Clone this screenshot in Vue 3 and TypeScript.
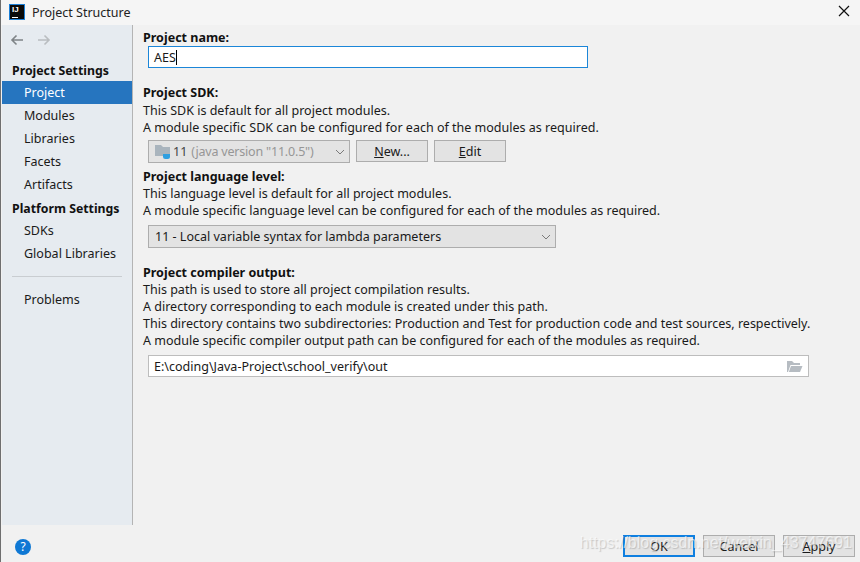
<script setup lang="ts">
interface NavRow {
  label: string;
  kind: 'head' | 'item' | 'sep';
  active?: boolean;
}

const navRows: NavRow[] = [
  { label: 'Project Settings', kind: 'head' },
  { label: 'Project', kind: 'item', active: true },
  { label: 'Modules', kind: 'item' },
  { label: 'Libraries', kind: 'item' },
  { label: 'Facets', kind: 'item' },
  { label: 'Artifacts', kind: 'item' },
  { label: 'Platform Settings', kind: 'head' },
  { label: 'SDKs', kind: 'item' },
  { label: 'Global Libraries', kind: 'item' },
  { label: '', kind: 'sep' },
  { label: 'Problems', kind: 'item' }
];
</script>

<template>
  <div class="dialog">
    <header class="title-bar">
      <div class="app-logo">
        <span class="logo-text">IJ</span>
        <span class="logo-line"></span>
      </div>
      <span class="title-text">Project Structure</span>
      <svg class="close-icon" width="12" height="12" viewBox="0 0 12 12">
        <path d="M1 1 L11 11 M11 1 L1 11" stroke="#111" stroke-width="1.2" fill="none" />
      </svg>
    </header>

    <div class="body">
      <aside class="sidebar">
        <div class="history">
          <svg width="16" height="14" viewBox="0 0 16 14">
            <path d="M14 7 H3 M7.5 2.5 L3 7 L7.5 11.5" stroke="#7f8487" stroke-width="1.6" fill="none" />
          </svg>
          <svg width="16" height="14" viewBox="0 0 16 14">
            <path d="M2 7 H13 M8.5 2.5 L13 7 L8.5 11.5" stroke="#b9bdc0" stroke-width="1.6" fill="none" />
          </svg>
        </div>
        <template v-for="row in navRows" :key="row.label">
          <div v-if="row.kind === 'sep'" class="nav-sep"></div>
          <div v-else :class="['nav-row', row.kind, { active: row.active }]">{{ row.label }}</div>
        </template>
      </aside>

      <main class="content">
        <section class="name-block">
          <label class="field-label">Project name:</label>
          <div class="name-input"><span>AES</span><i class="caret"></i></div>
        </section>

        <section class="sdk-block">
          <h4 class="field-label sdk-label">Project SDK:</h4>
          <p>This SDK is default for all project modules.</p>
          <p>A module specific SDK can be configured for each of the modules as required.</p>
          <div class="sdk-row">
            <div class="combo sdk-combo">
              <svg class="sdk-icon" width="16" height="16" viewBox="0 0 16 16">
                <path d="M0 1 H6 L8 3 H15 V12 H0 Z" fill="#a9b4bd" />
                <path d="M8 10 H15 V12.5 Q15 15 12.5 15 H10.5 Q8 15 8 12.5 Z" fill="#2f9fe0" />
              </svg>
              <span class="sdk-num">11</span>
              <span class="sdk-ver">(java version "11.0.5")</span>
              <svg class="chevron" width="10" height="6" viewBox="0 0 10 6">
                <path d="M1 1 L5 5 L9 1" stroke="#7a7a7a" stroke-width="1" fill="none" />
              </svg>
            </div>
            <button class="btn sdk-btn"><u>N</u>ew...</button>
            <button class="btn sdk-btn"><u>E</u>dit</button>
          </div>
        </section>

        <section class="level-block">
          <h4 class="field-label">Project language level:</h4>
          <p>This language level is default for all project modules.</p>
          <p>A module specific language level can be configured for each of the modules as required.</p>
          <div class="combo level-combo">
            <span>11 - Local variable syntax for lambda parameters</span>
            <svg class="chevron" width="10" height="6" viewBox="0 0 10 6">
              <path d="M1 1 L5 5 L9 1" stroke="#7a7a7a" stroke-width="1" fill="none" />
            </svg>
          </div>
        </section>

        <section class="output-block">
          <h4 class="field-label">Project compiler output:</h4>
          <p>This path is used to store all project compilation results.</p>
          <p>A directory corresponding to each module is created under this path.</p>
          <p>This directory contains two subdirectories: Production and Test for production code and test sources, respectively.</p>
          <p>A module specific compiler output path can be configured for each of the modules as required.</p>
          <div class="path-input">
            <span>E:\coding\Java-Project\school_verify\out</span>
            <svg width="16" height="13" viewBox="0 0 16 13">
              <path d="M0 1 H5 L7 3 H13 V5 H3.5 L1 12 H0 Z" fill="#b6bcc2" />
              <path d="M4 6 H15.5 L13 12 H1.8 Z" fill="#b6bcc2" />
            </svg>
          </div>
        </section>
      </main>
    </div>

    <footer class="footer">
      <div class="help">?</div>
      <div class="actions">
        <button class="btn primary">OK</button>
        <button class="btn">Cancel</button>
        <button class="btn"><u>A</u>pply</button>
      </div>
      <span class="watermark">https://blog.csdn.net/weixin_43747691</span>
    </footer>
  </div>
</template>

<style>
html,
body {
  margin: 0;
  background: #f1f1f1;
}
</style>

<style scoped>
.dialog {
  width: 860px;
  height: 562px;
  display: flex;
  flex-direction: column;
  overflow: hidden;
  box-sizing: border-box;
  border-left: 1px solid #6f6f6f;
  background: #f1f1f1;
  color: #1a1a1a;
  font-family: "Noto Sans", "Open Sans", sans-serif;
  font-size: 12.53px;
}

.title-bar {
  height: 25px;
  flex-shrink: 0;
  display: flex;
  align-items: center;
  background: #f5f5f5;
  padding-left: 8px;
  padding-right: 10px;
}

.app-logo {
  width: 16px;
  height: 16px;
  margin-top: -1px;
  background: #0a0a0a;
  border: 1.5px solid #1c7fd6;
  box-sizing: border-box;
  position: relative;
  margin-right: 7px;
}

.logo-text {
  position: absolute;
  left: 2px;
  top: 1px;
  color: #fff;
  font-family: "Liberation Sans", sans-serif;
  font-size: 8px;
  line-height: 8px;
  font-weight: 700;
}

.logo-line {
  position: absolute;
  left: 2px;
  bottom: 1px;
  width: 6px;
  height: 1px;
  background: #fff;
}

.title-text {
  flex: 1;
  font-size: 12.5px;
  color: #222;
}

.close-icon {
  margin-top: -3px;
}

.body {
  flex: 1;
  display: flex;
  min-height: 0;
}

.sidebar {
  width: 130px;
  flex-shrink: 0;
  background: #e6ebf0;
  border-right: 1px solid #b4b4b4;
  margin-left: 1px;
}

.history {
  height: 33px;
  display: flex;
  align-items: center;
  gap: 11px;
  padding: 0 0 4px 7px;
  box-sizing: border-box;
}

.nav-row {
  height: 23px;
  line-height: 23px;
  white-space: nowrap;
}

.nav-row.head {
  font-weight: 700;
  font-size: 12.3px;
  line-height: 25px;
  padding-left: 10px;
  color: #111;
}

.nav-row.item {
  padding-left: 22px;
}

.nav-row.active {
  background: #2675bf;
  color: #fff;
}

.nav-sep {
  height: 1px;
  margin: 11px 10px;
  background: #c9cdd1;
}

.content {
  flex: 1;
  padding: 4px 0 0 10px;
  min-width: 0;
}

p,
h4 {
  margin: 0;
}

p,
.field-label {
  display: block;
  height: 17px;
  line-height: 17px;
  white-space: nowrap;
}

.field-label {
  font-weight: 700;
  color: #111;
}

.sdk-label {
  height: 18px;
}

.name-input {
  box-sizing: border-box;
  width: 440px;
  height: 22px;
  margin: 0 0 0 5px;
  border: 1px solid #1c86d8;
  background: #fff;
  display: flex;
  align-items: center;
  padding-left: 5px;
}

.caret {
  width: 1px;
  height: 15px;
  background: #000;
}

.sdk-block {
  margin-top: 16px;
}

.sdk-row {
  display: flex;
  gap: 6px;
  margin: 4px 0 0 5px;
}

.combo {
  box-sizing: border-box;
  display: flex;
  align-items: center;
  background: #e3e3e3;
  border: 1px solid #adadad;
}

.sdk-combo {
  width: 202px;
  height: 23px;
  padding-left: 6px;
  color: #969696;
}

.sdk-icon {
  margin-right: 2px;
}

.sdk-num {
  color: #444;
  margin-right: 4px;
}

.sdk-ver {
  letter-spacing: -0.2px;
}

.chevron {
  margin-left: auto;
  margin-right: 4px;
}

.btn {
  box-sizing: border-box;
  background: #e3e3e3;
  border: 1px solid #adadad;
  font: inherit;
  color: #1a1a1a;
  padding: 0;
  width: 72px;
  height: 22px;
}

.level-block {
  margin-top: 5px;
}

.level-combo {
  width: 408px;
  height: 23px;
  margin: 6px 0 0 5px;
  padding-left: 6px;
}

.output-block {
  margin-top: 16px;
}

.path-input {
  box-sizing: border-box;
  width: 661px;
  height: 22px;
  margin: 6px 0 0 5px;
  border: 1px solid #bdbdbd;
  background: #fff;
  display: flex;
  align-items: center;
  justify-content: space-between;
  padding: 0 5px;
}

.footer {
  height: 37px;
  flex-shrink: 0;
  position: relative;
  display: flex;
  align-items: flex-start;
  justify-content: space-between;
}

.help {
  width: 16px;
  height: 16px;
  margin: 14px 0 0 14px;
  border-radius: 50%;
  background: #0f78d4;
  color: #fff;
  text-align: center;
  line-height: 16px;
  font-size: 12px;
}

.actions {
  display: flex;
  gap: 8px;
  margin: 10px 5px 0 0;
}

.actions .primary {
  border: 2px solid #0f7fe0;
}

.watermark {
  position: absolute;
  right: 8px;
  top: 9px;
  font-family: "Liberation Sans", sans-serif;
  font-size: 16px;
  color: rgba(255, 255, 255, 0.6);
  text-shadow: 1px 1px 1px rgba(120, 120, 120, 0.35);
  white-space: nowrap;
}
</style>
